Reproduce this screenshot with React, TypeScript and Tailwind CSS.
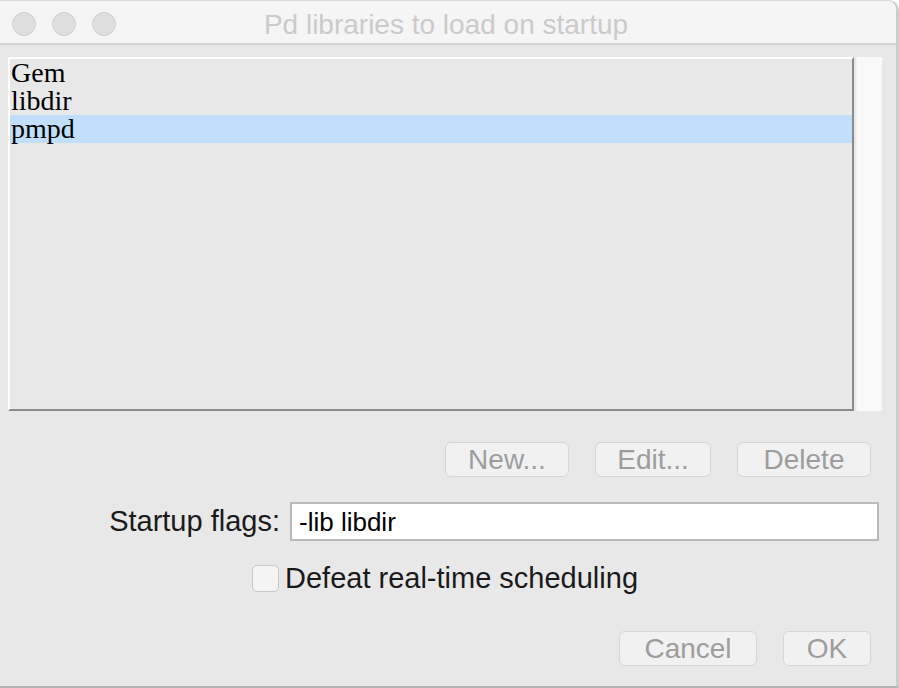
const SANS = { fontFamily: '"Liberation Sans", Arial, sans-serif' };

const libs = ["Gem", "libdir", "pmpd"];

function TrafficLight() {
  return <span className="block w-[24px] h-[24px] rounded-full bg-[#dfdfdf] border border-[#d2d2d2]" />;
}

function MacButton({ label, width }: { label: string; width: string }) {
  return (
    <button
      type="button"
      disabled
      className={`${width} h-[35px] flex items-center justify-center rounded-[6px] border border-[#d6d6d6] bg-[#f1f1f1] text-[28px] leading-none text-[#9d9d9d]`}
    >
      {label}
    </button>
  );
}

export default function App() {
  return (
    <div
      className="w-[899px] h-[688px] flex flex-col bg-[#e8e8e8] border-t border-[#dadada] border-r-[3px] border-r-[#cdcdcd] border-b-2 border-b-[#b4b4b4] rounded-tr-[10px] overflow-hidden"
      style={SANS}
    >
      {/* title bar */}
      <div className="h-[44px] grid grid-cols-[1fr_auto_1fr] items-center bg-[#f5f5f5] border-b-2 border-[#d3d3d3] px-[12px]">
        <div className="mt-[4px] flex gap-[16px]">
          <TrafficLight />
          <TrafficLight />
          <TrafficLight />
        </div>
        <div className="mt-[5px] text-[28px] leading-none text-[#cbcbcb] pr-[4px]">Pd libraries to load on startup</div>
        <div />
      </div>

      {/* list + scrollbar */}
      <div className="flex gap-[2px] pt-[12px] pl-[8px]">
        <div className="w-[846px] h-[354px] border-t-2 border-l-2 border-white border-r-2 border-b-2 border-r-[#8a8a8a] border-b-[#8a8a8a] bg-[#e8e8e8]">
          {libs.map((lib) => (
            <div
              key={lib}
              className={`h-[28px] pl-[1px] flex items-center text-[28px] leading-[28px] text-black ${
                lib === "pmpd" ? "bg-[#c1dffa]" : ""
              }`}
              style={{ fontFamily: '"Liberation Serif", "Times New Roman", serif' }}
            >
              {lib}
            </div>
          ))}
        </div>
        <div className="w-[26px] h-[354px] bg-[#f9f9f9] border-l border-[#f1f1f1]" />
      </div>

      {/* list actions */}
      <div className="mt-[31px] flex justify-end gap-[26px] pr-[25px]">
        <MacButton label="New..." width="w-[124px]" />
        <MacButton label="Edit..." width="w-[116px]" />
        <MacButton label="Delete" width="w-[134px]" />
      </div>

      {/* startup flags */}
      <div className="mt-[25px] flex items-center justify-end gap-[10px] pr-[17px]">
        <span className="text-[29px] leading-none text-[#1a1a1a]">Startup flags:</span>
        <div className="w-[589px] h-[39px] flex items-center bg-white border-2 border-[#bababa] pl-[7px] text-[26px] leading-none text-black">
          -lib libdir
        </div>
      </div>

      {/* realtime checkbox */}
      <div className="mt-[23px] flex items-center gap-[6px] pl-[252px]">
        <span className="block w-[27px] h-[27px] rounded-[5px] bg-[#f4f4f4] border border-[#c9c9c9]" />
        <span className="text-[29px] leading-none text-[#1a1a1a]">Defeat real-time scheduling</span>
      </div>

      {/* dialog buttons */}
      <div className="mt-[38px] flex justify-end gap-[26px] pr-[25px]">
        <MacButton label="Cancel" width="w-[138px]" />
        <MacButton label="OK" width="w-[88px]" />
      </div>
    </div>
  );
}
